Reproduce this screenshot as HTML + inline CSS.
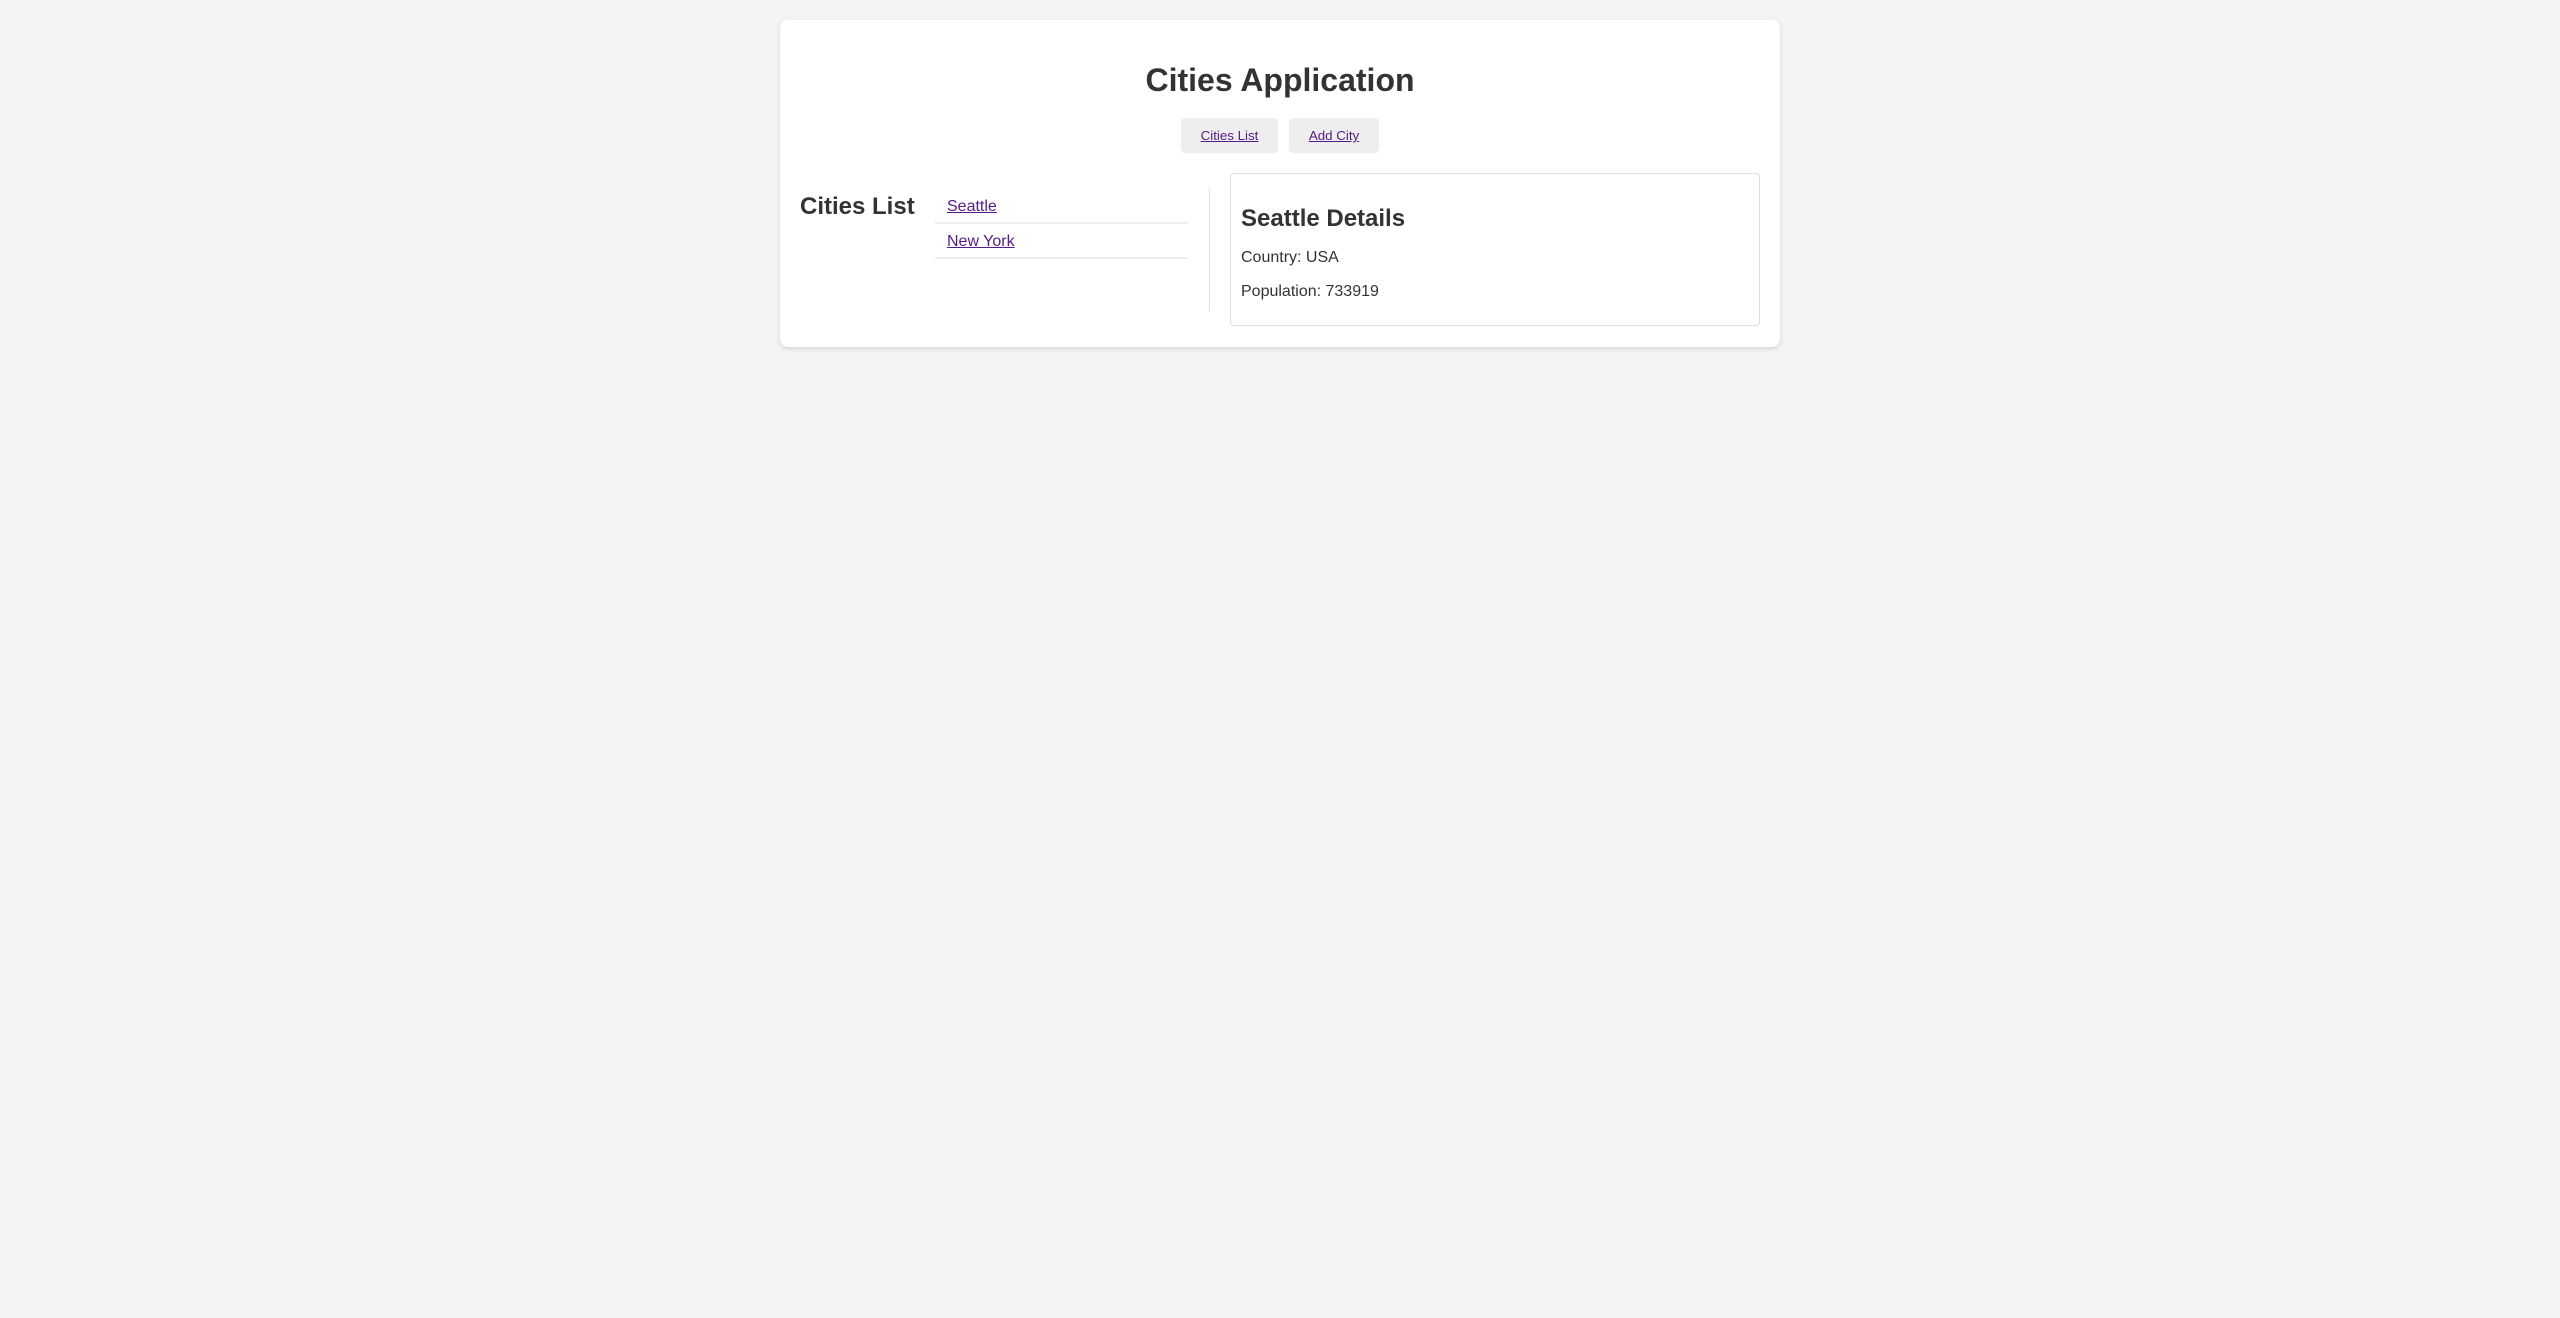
<!DOCTYPE html>
<html><head><style>
html,body{margin:0;background:#f3f3f3;font-family:"Liberation Sans",Arial,sans-serif;color:#333;}
.card{position:absolute;left:780px;top:20px;width:1000px;height:327px;background:#fff;border-radius:8px;box-shadow:0 2px 5px rgba(0,0,0,.12);}
.a{position:absolute;white-space:nowrap;}
a{color:#551a8b;text-decoration:underline;}
.btn{position:absolute;top:98px;height:35px;background:#eee;border-radius:4px;font-size:13.33px;line-height:35px;text-align:center;}
.sep{position:absolute;left:155px;width:253px;height:2px;background:#eee;}
</style></head><body>
<div class="card">
<div class="a" style="left:0;width:1000px;text-align:center;top:40px;font-size:32px;font-weight:bold;line-height:40px;">Cities Application</div>
<div class="btn" style="left:401px;width:97px;"><a>Cities List</a></div>
<div class="btn" style="left:509px;width:90px;"><a>Add City</a></div>
<div class="a" style="left:20px;top:172px;font-size:24px;font-weight:bold;line-height:30px;">Cities List</div>
<div class="a" style="left:167px;top:177px;font-size:16px;line-height:20px;"><a>Seattle</a></div>
<div class="sep" style="top:202px;"></div>
<div class="a" style="left:167px;top:212px;font-size:16px;line-height:20px;"><a>New York</a></div>
<div class="sep" style="top:237px;"></div>
<div style="position:absolute;left:429px;top:169px;width:1px;height:122px;background:#ddd;"></div>
<div style="position:absolute;left:450px;top:153px;width:528px;height:151px;border:1px solid #ddd;border-radius:4px;">
<div class="a" style="left:10px;top:30px;font-size:24px;font-weight:bold;line-height:30px;">Seattle Details</div>
<div class="a" style="left:10px;top:74px;font-size:16px;line-height:20px;">Country: USA</div>
<div class="a" style="left:10px;top:108px;font-size:16px;line-height:20px;">Population: 733919</div>
</div>
</div>
</body></html>
